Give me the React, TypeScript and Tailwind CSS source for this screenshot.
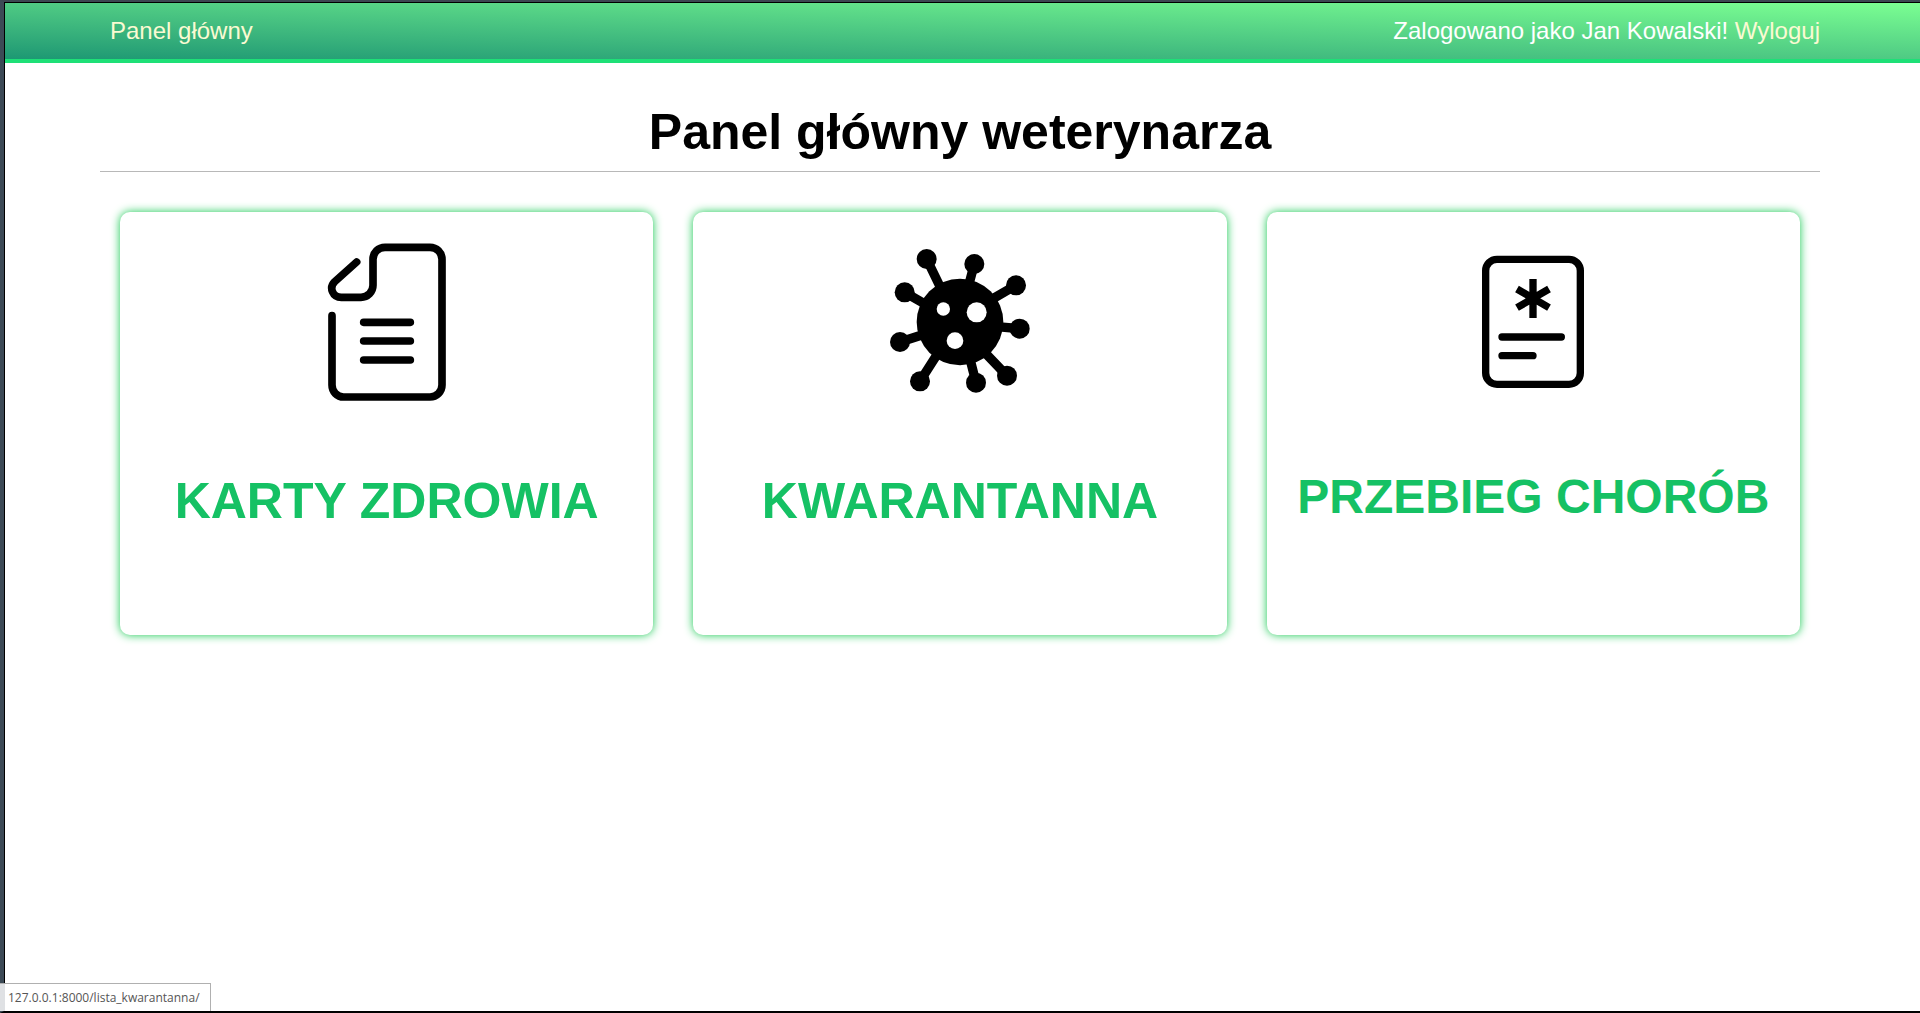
import type { ReactNode } from "react";

function HealthCardIcon() {
  return (
    <svg
      viewBox="-9 -1 540 600"
      className="h-[200px] w-[180px]"
      fill="none"
      stroke="#000"
      strokeWidth="23"
      strokeLinecap="round"
      aria-hidden="true"
    >
      <path d="M170 125 L104 184 C86 202 98 231 124 231 H183 C203 231 219 215 219 195 V117 C219 97 235 81 255 81 H390 C410 81 426 97 426 117 V494 C426 514 410 530 390 530 H131 C111 530 96 514 96 494 V286" />
      <path d="M191 306 H331 M191 362 H331 M191 419 H331" />
    </svg>
  );
}

const spikes = [
  [170, 86],
  [313, 101],
  [438, 165],
  [449, 295],
  [411, 436],
  [318, 457],
  [150, 453],
  [90, 335],
  [104, 186],
];

const stems = [
  "M170 86 L218 185",
  "M313 101 L292 180",
  "M438 165 L360 210",
  "M449 295 L380 289",
  "M411 436 L340 362",
  "M318 457 L296 370",
  "M150 453 L208 362",
  "M90 335 L165 311",
  "M104 186 L170 224",
];

function VirusIcon() {
  return (
    <svg viewBox="0 -31 540 600" className="h-[200px] w-[180px]" aria-hidden="true">
      <path d={stems.join(" ")} stroke="#000" strokeWidth="28" />
      {spikes.map(([x, y]) => (
        <circle key={`${x}-${y}`} cx={x} cy={y} r="30" />
      ))}
      <circle cx="270" cy="275" r="130" />
      <g fill="#fff">
        <circle cx="220" cy="236" r="20" />
        <circle cx="320" cy="246" r="30" />
        <circle cx="255" cy="331" r="25" />
      </g>
    </svg>
  );
}

function DiseaseCourseIcon() {
  return (
    <svg
      viewBox="-51 -60 540 600"
      className="h-[200px] w-[180px]"
      fill="none"
      stroke="#000"
      strokeWidth="22"
      aria-hidden="true"
    >
      <rect x="77" y="58" width="284" height="375" rx="34" />
      <path d="M219 117 V234 M171 147 L267 203 M267 147 L171 203" />
      <path d="M126 291 H304 M126 347 H219" strokeLinecap="round" />
    </svg>
  );
}

function Tile({ href, icon, children }: { href: string; icon: ReactNode; children: ReactNode }) {
  return (
    <a
      href={href}
      className="flex flex-col items-center rounded-[10px] bg-white pt-2 pb-[104px] text-center font-bold whitespace-nowrap text-[#15c164] shadow-[0_0_10px_#15c850]"
    >
      {icon}
      {children}
    </a>
  );
}

export default function App() {
  return (
    <div className="flex min-h-screen flex-col border-t-2 border-b-2 border-l-4 border-t-[#3c4651] border-b-black border-l-[#3c4a56] bg-white font-['Liberation_Sans',Arial,sans-serif] text-black">
      <div className="grow border-t border-l border-black">
        <header className="flex h-[60px] items-center justify-between border-b-4 border-[#1ee077] bg-linear-to-tr from-[#1c9873] to-[#7bff92] pr-[100px] pl-[105px] text-2xl text-white">
          <nav>
            <a href="#panel" className="text-[#fafad2]">Panel główny</a>
          </nav>
          <p>
            Zalogowano jako Jan Kowalski!{" "}
            <a href="#wyloguj" className="text-[#fafad2]">Wyloguj</a>
          </p>
        </header>
        <main className="pr-[100px] pl-[95px]">
          <h1 className="border-b border-[#b8b8b8] pt-[39px] pb-[9px] text-center text-[50px] leading-[60px] font-bold">
            Panel główny weterynarza
          </h1>
          <div className="grid grid-cols-3 gap-10 px-5 pt-10">
            <Tile href="#karty" icon={<HealthCardIcon />}>
              <h2 className="mt-[51px] text-[50px] leading-[60px]">KARTY ZDROWIA</h2>
            </Tile>
            <Tile href="#lista_kwarantanna" icon={<VirusIcon />}>
              <h2 className="mt-[51px] text-[50px] leading-[60px]">KWARANTANNA</h2>
            </Tile>
            <Tile href="#przebieg" icon={<DiseaseCourseIcon />}>
              <h2 className="mt-[47px] text-5xl leading-[60px]">PRZEBIEG CHORÓB</h2>
            </Tile>
          </div>
        </main>
      </div>
      <div className="fixed bottom-[2px] left-0 border-t border-r border-[#b0b0b0] bg-linear-to-r from-[#dfe1e4] from-[5px] to-white to-[5px] pt-px pr-[10px] pl-2 font-['Open_Sans','Noto_Sans',sans-serif] text-xs leading-[26px] text-[#555]">
        127.0.0.1:8000/lista_kwarantanna/
      </div>
    </div>
  );
}
